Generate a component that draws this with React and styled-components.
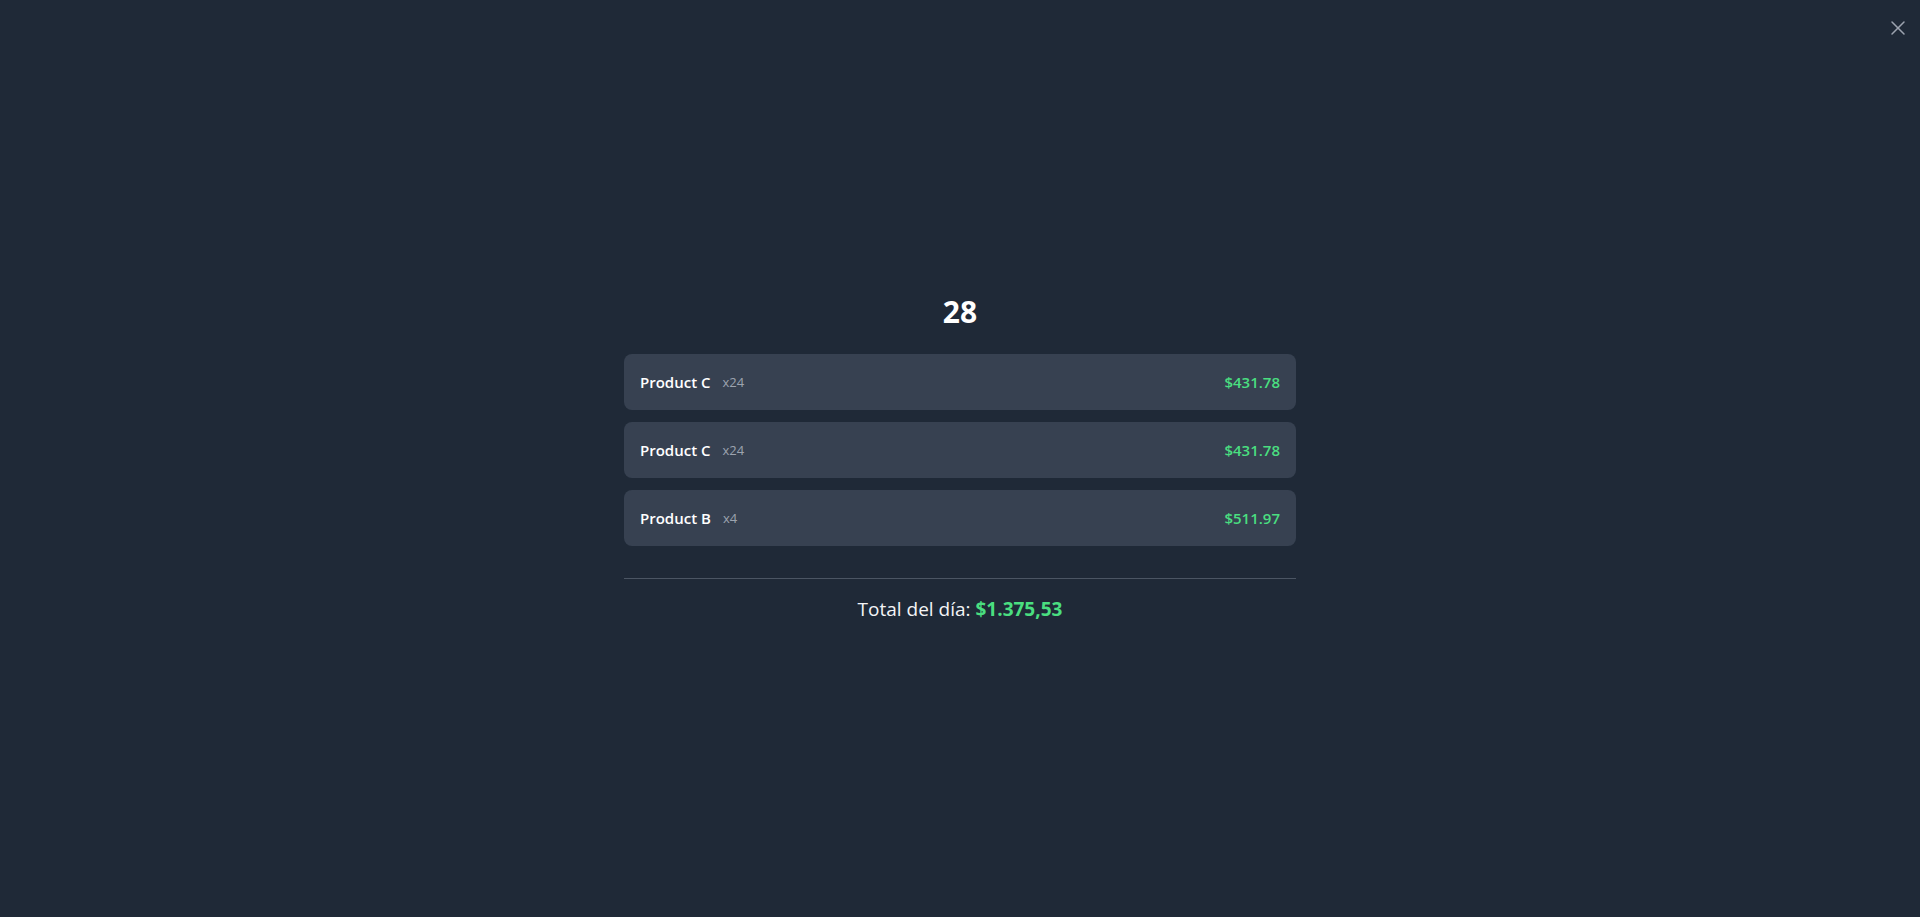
import React from 'react'
import styled, { createGlobalStyle } from 'styled-components'

const GlobalStyle = createGlobalStyle`
  html, body {
    margin: 0;
    padding: 0;
    background: #1f2937;
  }
  body {
    font-family: "Open Sans", "Noto Sans", sans-serif;
    color: #f9fafb;
  }
`

const items = [
  { id: 1, name: 'Product C', qty: 24, price: '$431.78' },
  { id: 2, name: 'Product C', qty: 24, price: '$431.78' },
  { id: 3, name: 'Product B', qty: 4, price: '$511.97' },
]

function App() {
  return (
    <>
      <GlobalStyle />
      <Overlay>
        <CloseButton aria-label="Cerrar">
          <svg width="24" height="24" viewBox="0 0 24 24" fill="none" stroke="currentColor" strokeWidth="1.5" strokeLinecap="round">
            <path d="M18 6 6 18" />
            <path d="m6 6 12 12" />
          </svg>
        </CloseButton>

        <Content>
          <DayTitle>28</DayTitle>
          <List>
            {items.map((item) => (
              <Row key={item.id}>
                <Left>
                  <Name>{item.name}</Name>
                  <Qty>x{item.qty}</Qty>
                </Left>
                <Price>{item.price}</Price>
              </Row>
            ))}
          </List>
          <Footer>
            Total del día: <Total>$1.375,53</Total>
          </Footer>
        </Content>
      </Overlay>
    </>
  )
}

export default App

const Overlay = styled.div`
  position: relative;
  min-height: 100vh;
  display: flex;
  align-items: center;
  justify-content: center;
  background: #1f2937;
`

const CloseButton = styled.button`
  position: absolute;
  top: 16px;
  right: 10px;
  padding: 0;
  border: none;
  background: transparent;
  color: #9ca3af;
  display: flex;
  cursor: pointer;
`

const Content = styled.div`
  width: 672px;
  display: flex;
  flex-direction: column;
`

const DayTitle = styled.h2`
  margin: 0 0 24px;
  text-align: center;
  font-size: 30px;
  line-height: 36px;
  font-weight: 700;
  color: #ffffff;
`

const List = styled.div`
  display: flex;
  flex-direction: column;
  gap: 12px;
`

const Row = styled.div`
  height: 56px;
  box-sizing: border-box;
  padding: 0 16px;
  display: flex;
  align-items: center;
  justify-content: space-between;
  background: #374151;
  border-radius: 8px;
`

const Left = styled.div`
  display: flex;
  align-items: center;
  gap: 12px;
`

const Name = styled.span`
  font-size: 15px;
  font-weight: 600;
  color: #ffffff;
`

const Qty = styled.span`
  font-size: 13px;
  color: #9ca3af;
`

const Price = styled.span`
  font-size: 15px;
  font-weight: 600;
  color: #4ade80;
`

const Footer = styled.div`
  margin-top: 32px;
  padding-top: 16px;
  border-top: 1px solid #4b5563;
  text-align: center;
  font-size: 19px;
  line-height: 28px;
  color: #f3f4f6;
`

const Total = styled.span`
  font-weight: 700;
  color: #4ade80;
`
